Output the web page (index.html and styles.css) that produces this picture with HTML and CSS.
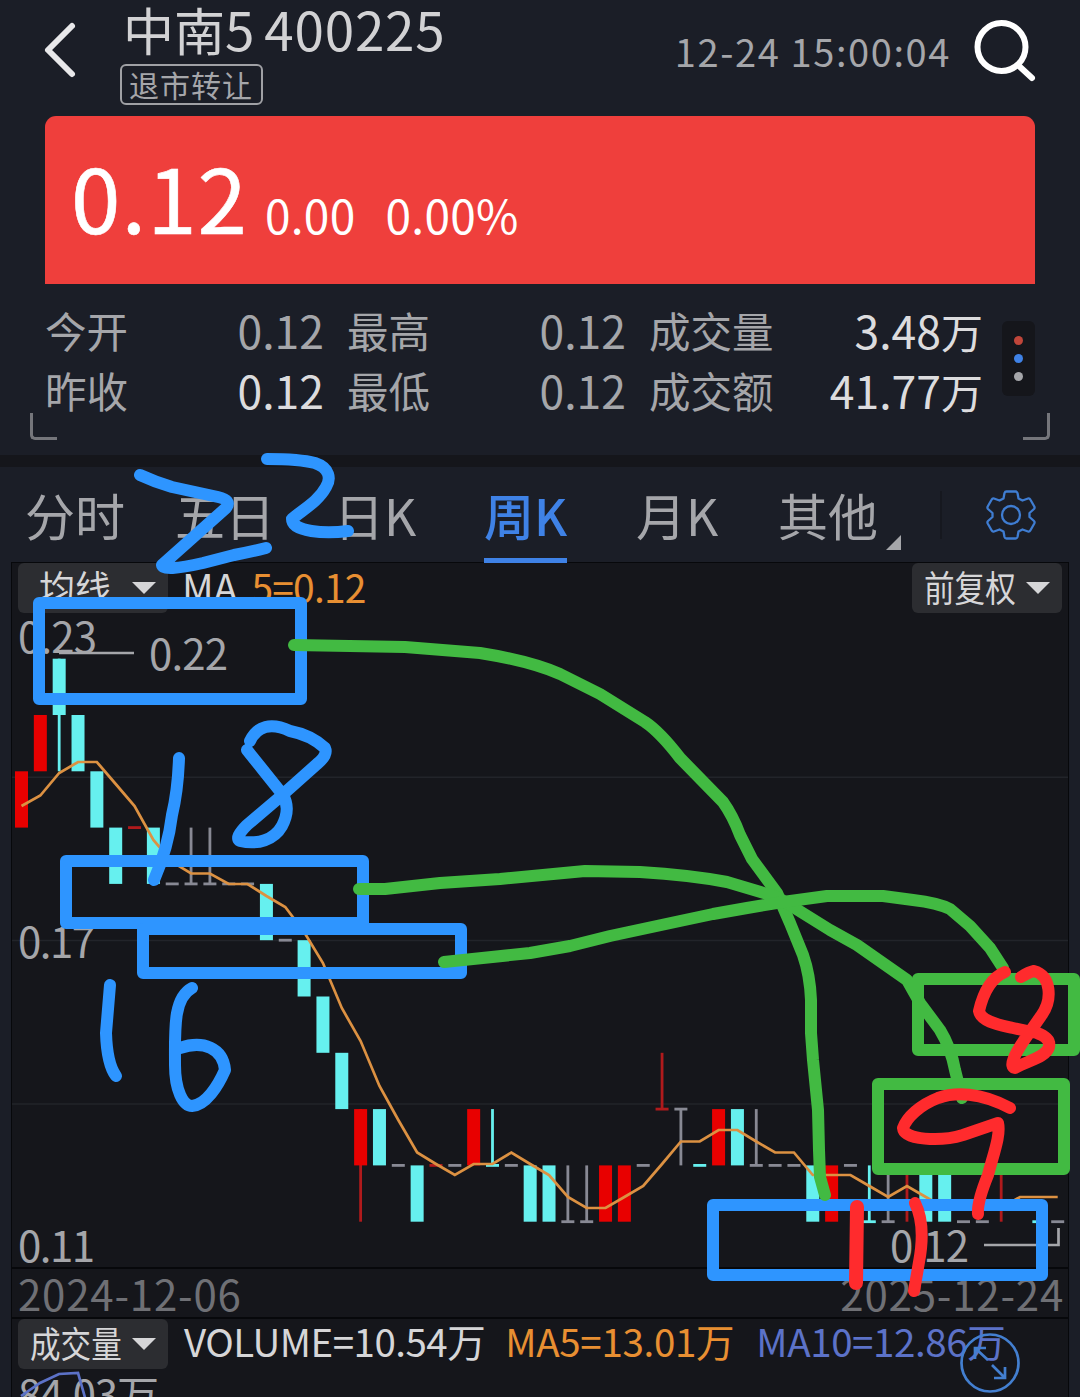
FILE: index.html
```html
<!DOCTYPE html>
<html lang="zh-CN">
<head>
  <meta charset="UTF-8" />
  <meta name="viewport" content="width=device-width, initial-scale=1.0" />
  <title>中南5 400225</title>
  <link rel="stylesheet" href="styles.css">
</head>
<body>
  <div class="screen">
    <header class="topbar">
      <svg class="back" width="40" height="64" viewBox="0 0 40 64">
        <path d="M32 8 L8 32 L32 56" />
      </svg>
      <div class="stock">
        <h1><span>中南<b>5</b></span><span class="code">400225</span></h1>
        <span class="tag">退市转让</span>
      </div>
      <span class="time">12-24 15:00:04</span>
      <svg class="search" width="62" height="62" viewBox="0 0 62 62">
        <circle cx="27.500" cy="27" r="24" />
        <path d="M45 46 L58 58" />
      </svg>
    </header>

    <section class="price">
      <span class="now">0.12</span>
      <span class="diff">0.00</span>
      <span class="diff">0.00%</span>
    </section>

    <section class="stats">
      <div class="stat-grid">
        <div class="stat"><span>今开</span><em>0.12</em></div>
        <div class="stat"><span>最高</span><em>0.12</em></div>
        <div class="stat light"><span>成交量</span><em>3.48<i>万</i></em></div>
        <div class="stat light"><span>昨收</span><em>0.12</em></div>
        <div class="stat"><span>最低</span><em>0.12</em></div>
        <div class="stat light"><span>成交额</span><em>41.77<i>万</i></em></div>
      </div>
      <div class="dots"><i class="red"></i><i class="blue"></i><i></i></div>
      <i class="corner left"></i>
      <i class="corner right"></i>
    </section>

    <nav class="tabs">
      <a>分时</a>
      <a>五日</a>
      <a>日K</a>
      <a class="active">周K</a>
      <a>月K</a>
      <a class="more">其他</a>
      <svg class="gear" width="52" height="52" viewBox="-26 -26 52 52">
        <path d="M-4.500 -23.500 H4.500 Q6 -23.500 6.500 -22 L7.500 -16.500 L11.500 -14.500 L17 -16.500 Q18.500 -17 19.300 -15.500 L23.300 -8.500 Q24 -7 23 -6 L18.500 -2 V2 L23 6 Q24 7 23.300 8.500 L19.300 15.500 Q18.500 17 17 16.500 L11.500 14.500 L7.500 16.500 L6.500 22 Q6 23.500 4.500 23.500 H-4.500 Q-6 23.500 -6.500 22 L-7.500 16.500 L-11.500 14.500 L-17 16.500 Q-18.500 17 -19.300 15.500 L-23.300 8.500 Q-24 7 -23 6 L-18.500 2 V-2 L-23 -6 Q-24 -7 -23.300 -8.500 L-19.300 -15.500 Q-18.500 -17 -17 -16.500 L-11.500 -14.500 L-7.500 -16.500 L-6.500 -22 Q-6 -23.500 -4.500 -23.500 Z" />
        <circle r="9" />
      </svg>
    </nav>

    <main class="panel">
      <div class="legend">
        <button class="pill ma"><span>均线</span></button>
        <span class="white">MA</span>
        <span class="orange">5=0.12</span>
        <button class="pill fq"><span>前复权</span></button>
      </div>
      <svg id="chart" class="plot" width="1056" height="653" viewBox="12 614 1056 653"></svg>
      <div class="dates"><span>2024-12-06</span><span>2025-12-24</span></div>
      <div class="legend volume">
        <button class="pill vol"><span>成交量</span></button>
        <span class="white">VOLUME=10.54万</span>
        <span class="orange">MA5=13.01万</span>
        <span class="violet">MA10=12.86万</span>
      </div>
      <svg class="vol-plot" width="1056" height="28" viewBox="12 1369 1056 28">
        <text class="axis" x="18" y="1410" textLength="141">84.03万</text>
        <polyline points="21,1395 40,1382 59,1373 78,1372 86,1400" />
      </svg>
    </main>

    <svg class="expand" width="62" height="62" viewBox="-31 -31 62 62">
      <circle r="28.500" />
      <path d="M-2 -3 L-15 -15 M-15 -4 V-15 H-4 M2 2 L15 15 M15 4 V15 H4" />
    </svg>

    <!-- hand-drawn notes over the chart -->
    <svg class="notes" width="1080" height="1397" viewBox="0 0 1080 1397">
      <g class="pen-blue">
        <path d="M140 475 Q155 482 172 487 L218 497 Q232 500 226 508 L162 565 Q163 572 203 563 L234 555 Q250 552 266 548" />
        <path d="M267 459 Q300 459 315 463 C330 468 331 479 326 487 C318 502 302 510 292 519 C292 532 325 534 348 531" />
        <rect x="39" y="603" width="262" height="96" />
        <rect x="66" y="861" width="297" height="62" />
        <rect x="143" y="929" width="318" height="44" />
        <rect x="713" y="1205" width="329" height="70" />
        <path d="M179 758 Q178 790 172 815 Q168 848 154 880" />
        <path d="M250 741 C257 726 271 722 290 731 Q311 735 325 748 Q328 755 317 764 L280 797 L247 825 Q234 838 240 841 C258 845 274 840 282 826 Q291 809 283 795 L263 770 L247 750" />
        <path d="M110 985 Q108 1010 106 1033 Q107 1064 116 1076" />
        <path d="M192 988 C173 998 175 1030 175 1065 C175 1090 183 1106 192 1106 C206 1105 218 1086 225 1070 C223 1048 203 1040 180 1048" />
      </g>
      <g class="pen-green">
        <path d="M294 645 L405 647 L480 653 Q530 661 560 674 L600 694 L645 722 Q660 732 680 758 L723 802 Q733 816 740 835 L752 859 L777 893 L790 923 L803 955 Q810 975 811 1000 L811 1033 L813 1060 L818 1110 L819 1150 L820 1177 L825 1195" />
        <path d="M359 889 L385 889 L440 883 L500 879 L585 871 L640 872 Q690 875 727 882 L777 897 L830 930 L857 945 L907 980 L920 1003 L940 1030 Q951 1048 955 1070 L962 1098" />
        <path d="M444 962 L530 953 L570 946 L610 936 L680 921 L713 914 L747 908 L783 902 L827 896 L883 896 L913 900 Q938 903 950 909 L970 926 L990 948 L1003 968" />
        <rect x="918" y="979" width="156" height="71" />
        <rect x="878" y="1084" width="186" height="85" />
      </g>
      <g class="pen-red">
        <path d="M1005 972 C988 979 982 998 979 1011 C981 1022 1000 1025 1013 1028 L1037 1033 Q1051 1038 1049 1047 C1046 1057 1030 1060 1015 1068 Q1006 1066 1027 1036 L1041 1016 C1053 1000 1051 975 1034 971 Q1029 972 1021 977" />
        <path d="M1010 1108 C980 1092 955 1092 938 1098 C920 1105 907 1117 903 1128 C904 1140 940 1142 963 1135 L998 1123 C1001 1135 993 1155 988 1175 Q977 1202 978 1214" />
        <path class="thick" d="M857 1207 L856 1283" />
        <path d="M915 1203 Q926 1225 919 1262 L914 1291" />
      </g>
    </svg>
  </div>

  <script src="chart.js"></script>
</body>
</html>
```
FILE: styles.css
```css
* {
  box-sizing: border-box;
}

body {
  margin: 0;
  background: #1b1e27;
  color: #a5a6aa;
  font-family: "Noto Sans CJK SC", sans-serif;
}

b, em, i {
  font-style: normal;
  font-weight: inherit;
}

.screen {
  position: relative;
  width: 1080px;
  height: 1397px;
  overflow: hidden;
}

svg {
  display: block;
  fill: none;
}

/* header */
.topbar {
  display: flex;
  height: 116px;
  padding: 0 44px 0 40px;
}

.back {
  margin-top: 18px;
  stroke: #e8e8ea;
  stroke-width: 6;
  stroke-linecap: round;
  stroke-linejoin: round;
}

.stock {
  margin-left: 40px;
  flex: 1;
}

h1 {
  display: flex;
  gap: 9px;
  height: 64px;
  margin: 0 0 0 3px;
  font-size: 51px;
  line-height: 57px;
  font-weight: 400;
  color: #d2d2d4;
}

h1 b,
.code {
  font-size: 53px;
  letter-spacing: 0.8px;
}

.tag {
  display: block;
  width: 143px;
  height: 41px;
  padding-left: 7px;
  border: 2px solid #a0a1a5;
  border-radius: 6px;
  font-size: 30px;
  line-height: 37px;
  letter-spacing: 1px;
}

.time {
  margin-right: 23px;
  font-size: 38px;
  line-height: 102px;
  letter-spacing: 1.6px;
}

.search {
  margin-top: 20px;
  stroke: #fff;
  stroke-width: 6;
  stroke-linecap: round;
}

/* price block */
.price {
  display: flex;
  align-items: baseline;
  height: 168px;
  margin: 0 45px;
  padding-left: 26px;
  background: #ef3f3c;
  border-radius: 11px 11px 0 0;
  color: #fff;
  line-height: 160px;
}

.now {
  margin-right: 17px;
  font-size: 89px;
  letter-spacing: 1px;
  -webkit-text-stroke: 0.6px #fff;
}

.diff {
  margin-right: 30px;
  font-size: 46px;
  letter-spacing: 0.3px;
}

/* stats */
.stats {
  position: relative;
  display: flex;
  height: 183px;
  padding: 16px 45px 0;
  border-bottom: 12px solid #15161b;
}

.stat-grid {
  display: grid;
  grid-template-columns: 279px 279px 334px;
  grid-auto-rows: 60px;
  column-gap: 23px;
}

.stat {
  display: flex;
  justify-content: space-between;
  font-size: 41.5px;
  line-height: 60px;
}

.stat em {
  font-size: 44.5px;
}

.stat i {
  font-size: 42px;
}

.light em {
  color: #dcdcde;
}

.dots {
  display: flex;
  flex-direction: column;
  align-items: center;
  justify-content: center;
  gap: 9px;
  width: 33px;
  height: 75px;
  margin: 21px 0 0 19px;
  border-radius: 6px;
  background: #15161b;
}

.dots i {
  width: 9px;
  height: 9px;
  border-radius: 50%;
  background: #a5a6aa;
}

.dots .red {
  background: #c0463a;
}

.dots .blue {
  background: #3f82e6;
}

.corner {
  position: absolute;
  top: 129px;
  width: 27px;
  height: 27px;
  border-bottom: 3px solid #75767b;
}

.corner.left {
  left: 30px;
  border-left: 3px solid #75767b;
  border-bottom-left-radius: 5px;
}

.corner.right {
  right: 30px;
  border-right: 3px solid #75767b;
  border-bottom-right-radius: 5px;
}

/* period tabs */
.tabs {
  display: grid;
  grid-template-columns: 150px 159px 150px 152px 142px 164px 52px;
  height: 96px;
  padding-left: 25px;
}

.tabs a {
  justify-self: start;
  height: 96px;
  font-size: 50px;
  line-height: 95px;
}

.tabs .active {
  border-bottom: 5px solid #3f82e6;
  color: #3f82e6;
  font-weight: 500;
}

.tabs .more {
  display: flex;
  justify-self: stretch;
  height: 48px;
  margin-top: 24px;
  border-right: 2px solid #16181f;
  line-height: 47px;
}

.more::after {
  content: "";
  height: 0;
  margin: 44px 0 0 8px;
  border-left: 15px solid transparent;
  border-bottom: 15px solid #a5a6aa;
}

.gear {
  margin: 22px 0 0 43px;
  stroke: #3f7dd2;
  stroke-width: 2.3;
  stroke-linejoin: round;
}

/* chart panel */
.panel {
  width: 1058px;
  height: 834px;
  margin-left: 11px;
  background: #15161b;
  border: 1px solid #07080b;
  border-width: 0 1px;
  box-shadow: 0 -1px #07080b;
}

.legend {
  display: flex;
  height: 51px;
  padding-left: 6px;
  font-size: 39px;
  line-height: 46px;
  white-space: nowrap;
}

.pill {
  display: flex;
  align-items: center;
  justify-content: space-between;
  width: 150px;
  height: 50px;
  padding: 0 12px;
  border: 0;
  border-radius: 6px;
  background: #2c2d31;
  color: #d6d6d8;
  font: 36px/46px "Noto Sans CJK SC", sans-serif;
}

.pill span {
  padding-bottom: 4px;
}

.pill::after {
  content: "";
  flex: none;
  border: 12px solid transparent;
  border-top: 12px solid #d6d6d8;
  border-bottom: 0;
}

.pill.ma {
  padding-left: 21px;
  margin-right: 14px;
}

.pill.fq span,
.pill.vol span {
  display: block;
  width: 92px;
  transform: scaleX(0.85);
  transform-origin: left;
}

.pill.fq {
  margin-left: auto;
  margin-right: 6px;
}

.pill.vol {
  margin-right: 16px;
}

.white {
  color: #d6d6d8;
}

.orange {
  margin-left: 14px;
  color: #e88f32;
  letter-spacing: -0.8px;
}

.violet {
  margin-left: 22px;
  color: #5c72c8;
  letter-spacing: -0.4px;
}

.plot .grid {
  stroke: #22242a;
  stroke-width: 1.5;
}

.axis {
  fill: #a5a6aa;
  font-size: 42px;
}

.leader {
  stroke: #a5a6aa;
  stroke-width: 2.7;
}

.avg {
  stroke: #dc9142;
  stroke-width: 2.7;
}

.up {
  fill: #e80000;
}

.up-line {
  fill: #b01a1c;
}

.down {
  fill: #66f0ef;
}

.flat {
  fill: #888994;
}

.dates {
  display: flex;
  justify-content: space-between;
  height: 52px;
  padding: 0 4px 0 6px;
  border: solid #07080b;
  border-width: 2px 0;
  color: #6f7075;
  font-size: 42px;
  line-height: 48px;
  letter-spacing: 0.8px;
}

.volume {
  font-size: 38.5px;
  line-height: 42px;
}

.volume .white {
  letter-spacing: -0.5px;
}

.volume .orange {
  margin-left: 20px;
  letter-spacing: -0.3px;
}

.vol-plot polyline {
  stroke: #5c72c8;
  stroke-width: 2.7;
}

.expand {
  position: absolute;
  left: 959px;
  top: 1332px;
  stroke: #437fd0;
  stroke-width: 2.7;
}

.notes {
  position: absolute;
  left: 0;
  top: 0;
  stroke-width: 12;
  stroke-linecap: round;
  stroke-linejoin: round;
}

.pen-blue {
  stroke: #2e95ff;
}

.pen-green {
  stroke: #42ba42;
}

.pen-red {
  stroke: #ff2b2d;
}

.thick {
  stroke-width: 14;
}
```
FILE: chart.js
```js
const TOP = 658.7;   // y of 0.22
const STEP = 56.3;   // px per 0.01
const LEFT = 21.5;
const GAP = 18.84;

// colour, body top, body bottom, wick top, wick bottom (steps below 0.22)
const WEEKS = [
  ["up", 2, 3], ["up", 1, 2], ["down", 0, 1, 0, 2], ["down", 1, 2], ["down", 2, 3],
  ["down", 3, 4], ["up", 3, 3], ["down", 3, 4], ["flat", 4, 4], ["flat", 4, 4, 3, 4],
  ["flat", 4, 4, 3, 4], ["flat", 4, 4], ["flat", 4, 4], ["down", 4, 5], ["flat", 5, 5],
  ["down", 5, 6], ["down", 6, 7], ["down", 7, 8], ["up", 8, 9, 8, 10], ["down", 8, 9],
  ["flat", 9, 9], ["down", 9, 10], ["up", 9, 9], ["flat", 9, 9], ["up", 8, 9],
  ["down", 9, 9, 8, 9], ["flat", 9, 9], ["down", 9, 10], ["down", 9, 10], ["flat", 10, 10, 9, 10],
  ["flat", 10, 10, 9, 10], ["up", 9, 10], ["up", 9, 10], ["flat", 9, 9], ["up", 8, 8, 7, 8],
  ["flat", 8, 8, 8, 9], ["down", 9, 9], ["up", 8, 9], ["down", 8, 9], ["flat", 9, 9, 8, 9],
  ["flat", 9, 9], ["flat", 9, 9], ["down", 9, 10], ["up", 9, 10], ["flat", 9, 9],
  ["down", 10, 10, 9, 10], ["flat", 10, 10, 9, 10], ["up", 9, 9, 9, 10], ["down", 9, 10], ["down", 9, 10],
  ["flat", 10, 10], ["flat", 10, 10], ["up", 9, 9, 9, 10], ["flat", 9, 9], ["down", 10, 10],
  ["flat", 10, 10],
];

const MA5 = [
  806, 795.5, 773, 762, 762, 784, 806, 840, 862, 873.5, 873.5, 884, 884, 896, 907, 932,
  963, 1008, 1041, 1086, 1120, 1152.5, 1164, 1175, 1164, 1164, 1152.5, 1164, 1175, 1197,
  1208, 1208, 1197, 1186, 1164, 1141.5, 1141.5, 1130, 1130, 1141.5, 1152.5, 1152.5, 1175,
  1175, 1175, 1186, 1197, 1186, 1197, 1208, 1208, 1208, 1208, 1197, 1197, 1197,
];

const x = i => LEFT + i * GAP;
const y = n => TOP + n * STEP;
const rect = (cls, left, top, w, h) =>
  `<rect class="${cls}" x="${left}" y="${top}" width="${w}" height="${h}"/>`;

let out = "";

[777.2, 940.5, 1104].forEach(gy => {
  out += `<line class="grid" x1="12" x2="1068" y1="${gy}" y2="${gy}"/>`;
});

WEEKS.forEach(([color, top, bottom, high, low], i) => {
  const line = color === "up" ? "up-line" : color;
  if (high !== undefined) {
    out += rect(line, x(i) - 1.4, y(high), 2.8, y(low) - y(high));
  }
  if (top === bottom) {
    out += rect(line, x(i) - 6.5, y(top) - 1.4, 13, 2.8);
  } else {
    out += rect(color, x(i) - 6.5, y(top), 13, y(bottom) - y(top));
  }
});

out += `<polyline class="avg" points="${MA5.map((v, i) => `${x(i)},${v}`).join(" ")}"/>`;

out += `
  <text class="axis" x="18" y="653" textLength="79">0.23</text>
  <text class="axis" x="18" y="958" textLength="77">0.17</text>
  <text class="axis" x="18" y="1262" textLength="77">0.11</text>
  <text class="axis" x="149" y="670" textLength="79">0.22</text>
  <text class="axis" x="890" y="1262" textLength="79">0.12</text>
  <path class="leader" d="M59 653 H134 M984 1245 H1058.500 V1228"/>`;

document.getElementById("chart").innerHTML = out;
```
